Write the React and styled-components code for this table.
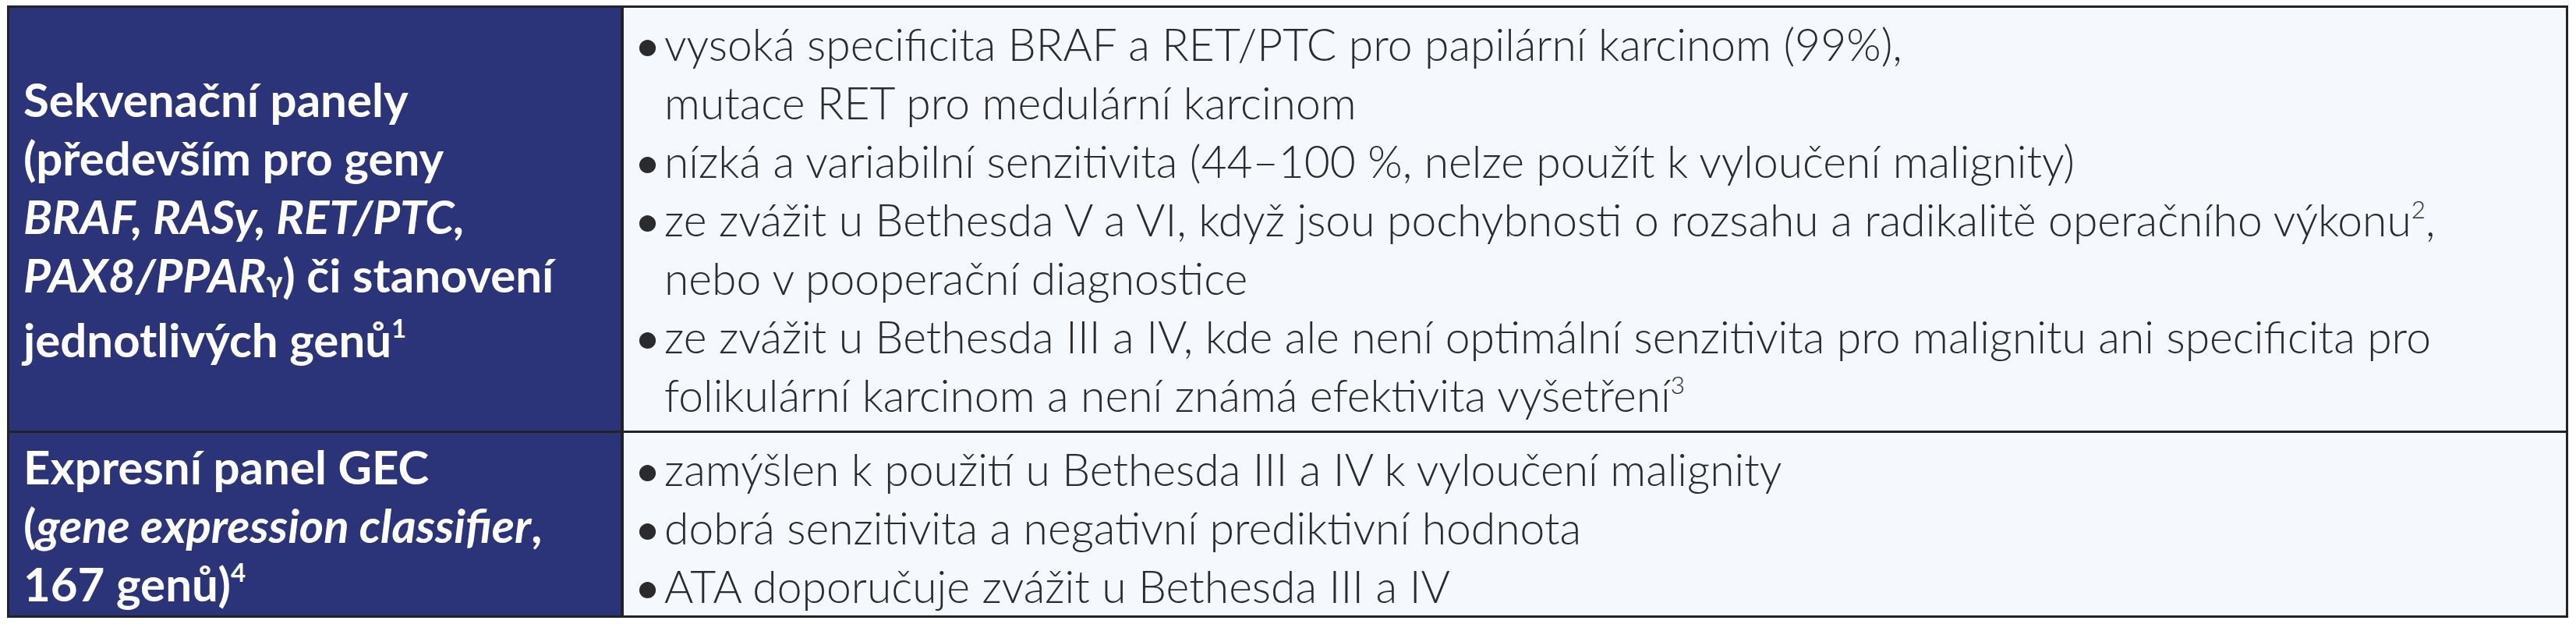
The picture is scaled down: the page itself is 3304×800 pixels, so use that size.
import React from 'react';
import styled, { createGlobalStyle } from 'styled-components';

const GlobalStyle = createGlobalStyle`
  html, body {
    margin: 0;
    padding: 0;
    background: #ffffff;
  }
`;

const Page = styled.div`
  padding: 7px 10px 8px 9px;
`;

const Table = styled.div`
  box-sizing: border-box;
  width: 3285px;
  display: grid;
  grid-template-columns: 784px 1fr;
  grid-template-rows: 542px 234px;
  column-gap: 4px;
  row-gap: 3px;
  background: #222326;
  border: 3px solid #222326;
`;

const HeadCell = styled.div`
  background: #2c3479;
  color: #ffffff;
  font-family: Lato, "Liberation Sans", sans-serif;
  font-weight: 700;
  font-size: 60px;
  line-height: 75px;
  padding: ${(p) => (p.$top ? `${p.$top}px` : '0')} 16px 0 18px;
  display: flex;
  flex-direction: column;
  justify-content: ${(p) => (p.$top ? 'flex-start' : 'center')};
  white-space: nowrap;
`;

const BodyCell = styled.div`
  background: #f5f9fd;
  color: #2b2b2e;
  font-family: Lato, "Liberation Sans", sans-serif;
  font-weight: 300;
  font-size: 57px;
  line-height: 75px;
  padding: 9px 20px 0 14px;
`;

const List = styled.ul`
  list-style: none;
  margin: 0;
  padding: 0;
`;

const Item = styled.li`
  display: flex;
  white-space: nowrap;
`;

const Bullet = styled.span`
  flex: 0 0 38px;
  font-weight: 400;
`;

const Em = styled.i`
  font-style: italic;
`;

const Gamma = styled.span`
  font-style: normal;
  font-size: 0.62em;
`;

const Sup = styled.sup`
  font-size: 0.55em;
  line-height: 0;
  vertical-align: 0.75em;
`;

const Point = ({ children }) => (
  <Item>
    <Bullet>•</Bullet>
    <span>{children}</span>
  </Item>
);

const App = () => {
  return (
    <Page>
      <GlobalStyle />
      <Table>
        <HeadCell>
          <div>Sekvenační panely</div>
          <div>(především pro geny</div>
          <div>
            <Em>BRAF, RASy, RET/PTC,</Em>
          </div>
          <div>
            <Em>PAX8/PPAR</Em>
            <Gamma>γ</Gamma>) či stanovení
          </div>
          <div>
            jednotlivých genů<Sup>1</Sup>
          </div>
        </HeadCell>
        <BodyCell>
          <List>
            <Point>
              vysoká specificita BRAF a RET/PTC pro papilární karcinom (99%),
              <br />
              mutace RET pro medulární karcinom
            </Point>
            <Point>nízká a variabilní senzitivita (44–100 %, nelze použít k vyloučení malignity)</Point>
            <Point>
              ze zvážit u Bethesda V a VI, když jsou pochybnosti o rozsahu a radikalitě operačního výkonu
              <Sup>2</Sup>,
              <br />
              nebo v pooperační diagnostice
            </Point>
            <Point>
              ze zvážit u Bethesda III a IV, kde ale není optimální senzitivita pro malignitu ani specificita pro
              <br />
              folikulární karcinom a není známá efektivita vyšetření<Sup>3</Sup>
            </Point>
          </List>
        </BodyCell>

        <HeadCell $top={6}>
          <div>Expresní panel GEC</div>
          <div>
            (<Em>gene expression classifier</Em>,
          </div>
          <div>
            167 genů)<Sup>4</Sup>
          </div>
        </HeadCell>
        <BodyCell>
          <List>
            <Point>zamýšlen k použití u Bethesda III a IV k vyloučení malignity</Point>
            <Point>dobrá senzitivita a negativní prediktivní hodnota</Point>
            <Point>ATA doporučuje zvážit u Bethesda III a IV</Point>
          </List>
        </BodyCell>
      </Table>
    </Page>
  );
};

export default App;
